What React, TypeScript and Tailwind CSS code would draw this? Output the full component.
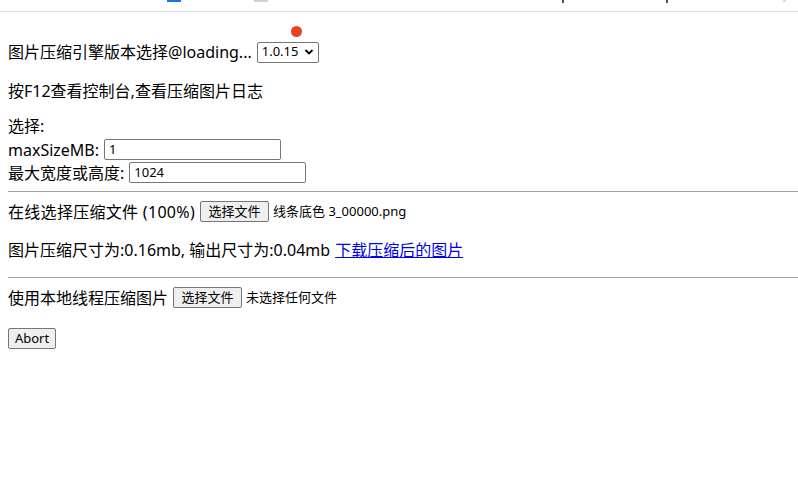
import React from "react";

const font = { fontFamily: '"Noto Sans", "Noto Sans CJK SC", sans-serif' };
const ctrlFont = { fontFamily: '"Noto Sans", "Noto Sans CJK SC", sans-serif' };

function FileButton() {
  return (
    <button
      className="h-[21px] w-[69px] border border-[#767676] rounded-[2px] bg-[#efefef] text-[13px] text-black leading-none flex items-center justify-center"
      style={ctrlFont}
    >
      选择文件
    </button>
  );
}

export default function App() {
  return (
    <div className="w-[798px] h-[490px] bg-white text-black overflow-hidden" style={font}>
      <div className="relative h-[12px] border-b border-[#dcdcdc]">
        <span className="absolute left-[167px] top-0 w-[14px] h-[2px] bg-[#1a73e8]" />
        <span className="absolute left-[254px] top-0 w-[14px] h-[2px] bg-[#d0d0d0]" />
        <span className="absolute left-[562px] top-0 w-[2px] h-[3px] bg-[#555]" />
        <span className="absolute left-[666px] top-0 w-[2px] h-[3px] bg-[#555]" />
        <span className="absolute left-[783px] top-0 w-[3px] h-[2px] bg-[#ddd]" />
      </div>
      <div className="pl-2 text-[16px]">
        <div className="mt-[14px] ml-[283px] w-[11px] h-[11px] rounded-full bg-[#e8431d]" />
        <div className="mt-[3px] h-[24px] flex items-center">
          <span>图片压缩引擎版本选择@loading...</span>
          <span className="ml-[5px] h-[21px] w-[62px] border border-[#767676] rounded-[2px] flex items-center pl-[4px] pr-[4px] text-[13px] justify-between" style={ctrlFont}>
            <span>1.0.15</span>
            <svg width="10" height="8" viewBox="0 0 10 8">
              <path d="M1.5 2 L5 5.5 L8.5 2" fill="none" stroke="black" strokeWidth="1.8" />
            </svg>
          </span>
        </div>
        <div className="mt-[15px] h-[24px] flex items-center">按F12查看控制台,查看压缩图片日志</div>
        <div className="mt-[11px] h-[23px] flex items-center">选择:</div>
        <div className="mt-[1px] h-[23px] flex items-center">
          <span>maxSizeMB:</span>
          <span className="ml-[5px] h-[21px] w-[177px] border border-[#767676] rounded-[2px] flex items-center pl-[4px] text-[13px]" style={ctrlFont}>1</span>
        </div>
        <div className="h-[23px] flex items-center">
          <span>最大宽度或高度:</span>
          <span className="ml-[5px] h-[21px] w-[177px] border border-[#767676] rounded-[2px] flex items-center pl-[4px] text-[13px]" style={ctrlFont}>1024</span>
        </div>
        <div className="mt-[7px] border-t border-[#a0a0a0]" />
        <div className="mt-[8px] h-[23px] flex items-center">
          <span className="tracking-[0.3px]">在线选择压缩文件 (100%)</span>
          <span className="ml-[5px]"><FileButton /></span>
          <span className="ml-[4px] text-[13px]" style={ctrlFont}>线条底色 3_00000.png</span>
        </div>
        <div className="mt-[15px] h-[24px] flex items-center">
          <span>图片压缩尺寸为:0.16mb, 输出尺寸为:0.04mb</span>
          <a className="ml-[5px] text-[#0000ee] underline" href="#">下载压缩后的图片</a>
        </div>
        <div className="mt-[15px] border-t border-[#a0a0a0]" />
        <div className="mt-[8px] h-[23px] flex items-center">
          <span>使用本地线程压缩图片</span>
          <span className="ml-[5px]"><FileButton /></span>
          <span className="ml-[4px] text-[13px]" style={ctrlFont}>未选择任何文件</span>
        </div>
        <div className="mt-[16px]">
          <button className="h-[21px] w-[48px] border border-[#767676] rounded-[2px] bg-[#efefef] text-[13px] leading-none" style={ctrlFont}>Abort</button>
        </div>
      </div>
    </div>
  );
}
